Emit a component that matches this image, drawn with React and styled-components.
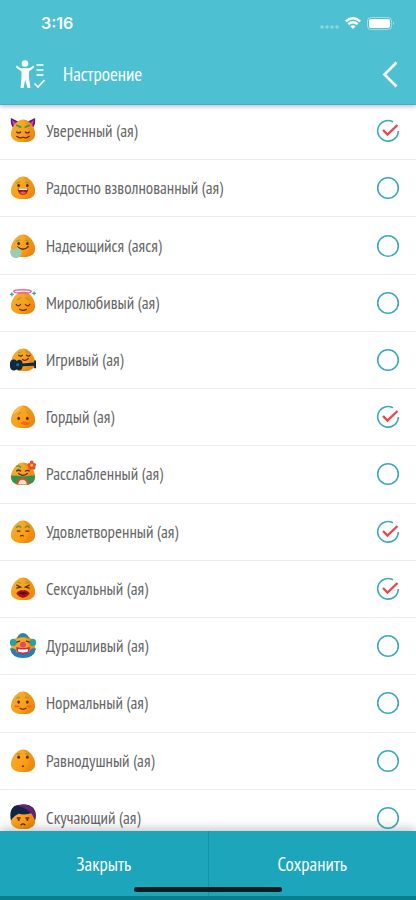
import React, { useState } from 'react';
import styled, { createGlobalStyle } from 'styled-components';

const GlobalStyle = createGlobalStyle`
  *, *::before, *::after { box-sizing: border-box; }
  body { margin: 0; background: #fff; }
  button, input { font: inherit; }
`;

const Screen = styled.div`
  position: relative;
  display: flex;
  flex-direction: column;
  height: 100vh;
  overflow: hidden;
  background: #fff;
  color: #666;
  font-family: 'PT Sans Narrow', 'Liberation Sans Narrow', 'Open Sans', sans-serif;
`;

const Header = styled.header`
  position: relative;
  z-index: 1;
  background: #4dc0d2;
  color: #fff;
  border-bottom: 1px solid #43b0c2;
  box-shadow: 0 1px 5px rgba(0, 0, 0, 0.3);
`;

const StatusBar = styled.div`
  display: flex;
  align-items: center;
  justify-content: space-between;
  height: 46px;
  padding: 0 21px 0 41px;
`;

const Clock = styled.time`
  font: 600 16px/20px Inter, sans-serif;
`;

const StatusIcons = styled.div`
  display: flex;
  align-items: center;
  gap: 6px;
`;

const TitleBar = styled.div`
  display: flex;
  align-items: center;
  height: 58px;
  padding: 0 14px 2px 16px;
`;

const Title = styled.h1`
  flex: 1;
  margin: 0 0 0 18px;
  font-size: 19px;
  line-height: 24px;
  font-weight: 400;
`;

const BackButton = styled.button`
  display: grid;
  place-items: center;
  padding: 0 4px;
  border: 0;
  background: none;
  color: inherit;
`;

const Content = styled.main`
  flex: 1;
  display: flex;
  min-height: 0;
  overflow: hidden;
`;

const MoodList = styled.ul`
  flex: 1;
  display: grid;
  grid-auto-rows: 1fr;
  margin: -2px 0 -16px;
  padding: 0;
  list-style: none;
`;

const MoodItem = styled.li`
  display: flex;
  border-bottom: 1px solid #ebebeb;
`;

const MoodLabel = styled.label`
  flex: 1;
  display: flex;
  align-items: center;
  gap: 9px;
  padding: 0 16px 0 9px;
`;

const MoodName = styled.span`
  flex: 1;
  font-size: 17px;
  line-height: 24px;
`;

const CheckCell = styled.span`
  display: grid;
  place-items: center;
  & > * { grid-area: 1 / 1; }
`;

const CheckInput = styled.input`
  appearance: none;
  width: 24px;
  height: 24px;
  margin: 0;
`;

const CheckDrawing = styled.svg`
  pointer-events: none;
`;

const Footer = styled.footer`
  position: relative;
  z-index: 1;
  display: flex;
  height: 69px;
  background: #1ca5bb;
  border-bottom: 4px solid #087f90;
  box-shadow: 0 -2px 10px rgba(0, 0, 0, 0.25);
`;

const FooterButton = styled.button`
  flex: 1;
  padding: 0;
  border: 0;
  border-right: ${({ $divided }) => ($divided ? '1px solid #1793a7' : '0')};
  background: none;
  color: #fff;
  font-size: 19px;
  line-height: 24px;
`;

const HomeIndicator = styled.div`
  position: absolute;
  z-index: 2;
  bottom: 8px;
  left: 50%;
  width: 148px;
  height: 5px;
  margin-left: -74px;
  border-radius: 3px;
  background: #111c1e;
`;

const ink = { fill: 'none', stroke: '#5b2c16', strokeWidth: 1.3, strokeLinecap: 'round' };
const BODY = 'M14.500 2.500C18.500 2.500 22 5.500 24.500 9.500C26.200 12.500 27 15 27 17.500C27 23 22.500 26 14.500 26C6.500 26 2 23 2 17.500C2 15 2.800 12.500 4.500 9.500C7 5.500 10.500 2.500 14.500 2.500Z';

function Brows() {
  return <path d="M8 9.500L11 8.500M17 8.500L20 9.500" {...ink} stroke="#8aa53f" />;
}
function Dots({ y = 14 }) {
  return <g fill="#5b2c16"><ellipse cx="10" cy={y} rx="1.400" ry="1.700" /><ellipse cx="19" cy={y} rx="1.400" ry="1.700" /></g>;
}

const faces = {
  confident: {
    back: <><path d="M2 1L10 5L5 12Q1 8 2 1ZM27 1L19 5L24 12Q28 8 27 1Z" fill="#5d1b78" /><path d="M3 3L7 6L5 10ZM26 3L22 6L24 10Z" fill="#e936a7" /></>,
    front: <><path d="M8 8.500L12 10.500M21 8.500L17 10.500" {...ink} stroke="#359c52" strokeWidth="1.800" /><path d="M8 15.500Q10 17.500 12 15.500M17 15.500Q19 17.500 21 15.500M8 20Q11 22.500 14.500 21Q18 22.500 21 20" {...ink} /></>,
  },
  excited: { front: <><Brows /><Dots y={12} /><path d="M9 15H20Q19.500 21.500 14.500 21.500Q9.500 21.500 9 15Z" fill="#8d1d25" /><path d="M10 15H19V16.500H10Z" fill="#fff" /><path d="M11 19.500Q14.500 17 18 19.500Q14.500 22.500 11 19.500Z" fill="#f25663" /></> },
  hopeful: { front: <><Brows /><Dots y={12} /><path d="M9 15.500Q15 20.500 20 15" {...ink} /><path d="M1 20Q2 16.500 6 18L9 15.500L11 17.500Q14 18 13 22Q12 27 7 27Q2 27 1 20Z" fill="#9ccdb4" /></> },
  peaceful: { front: <><ellipse cx="14" cy="2.500" rx="9" ry="1.700" fill="none" stroke="#e6629c" strokeWidth="1.600" /><path d="M3 4V7M1.500 5.500H4.500M26 3V6M24.500 4.500H27.500" {...ink} stroke="#35a69c" /><path d="M9 11L12 9M17 9L20 11" {...ink} stroke="#8fa63c" /><path d="M7.500 16Q9.500 19 12 16M17 16Q19.500 19 21.500 16M11 21Q14.500 23.500 18 21" {...ink} /></> },
  playful: { front: <><path d="M10 7L13 6M18 6L21 7" {...ink} stroke="#9ca349" /><path d="M10 9.500Q12 11.500 14 9.500M18 9.500Q20 11.500 22 9.500M14 14Q17 16 20 13" {...ink} /><path d="M1 18C1 13.500 6 13 8 15.500C11 13 14 14.500 14 18L26 17V15H28V23H26V20.500L14 21C14 25 11 26 8 24C5 27 1 25 1 21Z" fill="#0c2940" /><circle cx="9" cy="19.500" r="1.600" fill="#346789" /></> },
  proud: { front: <><path d="M14.500 2.500Q10 9 4 12Q8 4 14.500 2.500Z" fill="#ffc24b" /><path d="M9 12L12 10M19 10L22 12" {...ink} stroke="#a1a543" /><Dots y={16} /><path d="M12 21Q15 17.500 22 21Q18 25 12 21Z" fill="#f2662b" /></> },
  relaxed: { front: <><path d="M2 16Q8 16 14.500 17Q21 16 27 16Q27 26 14.500 26Q2 26 2 16Z" fill="#299557" /><path d="M7 25Q8 18.500 14 18.500Q20 18.500 21 25Z" fill="#d94d2b" /><path d="M9.500 25.500Q10 20.500 14 20.500Q18 20.500 18.500 25.500Z" fill="#f6e5ba" /><path d="M8 6.500Q10 5.500 12 7.500M8 10.500Q10 9 12 11" {...ink} stroke="#369b52" /><path d="M8 11.500Q10 10 12 11.500M17 11.500Q19 10 21 11.500M10 14Q14.500 18 19 14" {...ink} /><g fill="#e5502f"><circle cx="23.500" cy="2.500" r="2" /><circle cx="21" cy="5" r="2" /><circle cx="26" cy="5" r="2" /><circle cx="22" cy="8" r="2" /><circle cx="25.500" cy="8" r="2" /></g><circle cx="23.500" cy="5.500" r="1.500" fill="#ffb43a" /></> },
  satisfied: { front: <><path d="M8 9.500Q10 7 12 9.500M17 9.500Q19 7 21 9.500" {...ink} stroke="#4c9c49" strokeWidth="1.700" /><path d="M8.500 13.500H11.500M17.500 13.500H20.500M12 18.500Q14 17.500 15 18.500" {...ink} /></> },
  sexy: { front: <><path d="M9 7.500L12 8.500M20 7.500L17 8.500" {...ink} stroke="#89a642" /><path d="M8 10.500L12 12.500L8 13.500M21 10.500L17 12.500L21 13.500" {...ink} /><path d="M7.500 19Q12 14.500 14.500 16Q17 14.500 21.500 19Q18 24 14.500 23.500Q11 24 7.500 19Z" fill="#a91022" /><path d="M9.500 19Q14.500 16.500 19.500 19Q14.500 21.500 9.500 19Z" fill="#430d19" /></> },
  goofy: {
    back: <><circle cx="5" cy="11" r="4" fill="#2aa3a0" /><circle cx="24" cy="11" r="4" fill="#2aa3a0" /></>,
    front: <><path d="M10 3Q14.500 -1 19 3L21 7Q14.500 4 8 7Z" fill="#2786a8" /><path d="M1 17Q7 16 8 21H21Q22 16 28 17Q26 27 14.500 27Q3 27 1 17Z" fill="#237fb5" /><circle cx="4.500" cy="11" r="3.500" fill="#2aa3a0" /><circle cx="24.500" cy="11" r="3.500" fill="#2aa3a0" /><path d="M8 10.500L11 9.500M18 9.500L21 10.500" {...ink} /><path d="M7.500 15.500Q14.500 17.500 21.500 15.500Q22 23 14.500 23Q7 23 7.500 15.500Z" fill="#cc2947" /><path d="M9.500 17.500Q14.500 19 19.500 17.500V20.500Q14.500 22 9.500 20.500Z" fill="#fff" /><circle cx="14.500" cy="13" r="3" fill="#ed3d75" /></>,
  },
  normal: { front: <><Brows /><Dots y={13.500} /><path d="M11.500 20Q14.500 22 17.500 20" {...ink} /><path d="M6.500 18H10M19 18H22.500" {...ink} stroke="#f2662e" strokeWidth="2" /></> },
  indifferent: { front: <><path d="M8.500 7H11.500M17.500 7H20.500" {...ink} stroke="#8d9c45" /><Dots y={10.500} /><ellipse cx="14.500" cy="20" rx="1.300" ry="1" fill="#8a3b1a" /></> },
  bored: { front: <><path d="M2 17C0 8 3 2 9 1Q20 -1 25 4Q29 8 27 17Q26 14 24 9Q17 12 10 10Q5 12 2 17Z" fill="#122443" /><path d="M8 2Q20 -2 25 5Q29 9 27 16Q22 4 8 2Z" fill="#632178" /><path d="M8.500 14.500H11.500M17.500 14.500H20.500M12.500 21.500Q14.500 19.500 16.500 21.500" {...ink} /><circle cx="10" cy="16.500" r="1.100" fill="#5b2c16" /><circle cx="19" cy="16.500" r="1.100" fill="#5b2c16" /></> },
};

function MoodFace({ kind }) {
  const { back, front } = faces[kind];
  const gradient = `skin-${kind}`;
  return (
    <svg width="28" height="28" viewBox="0 0 29 29" aria-hidden="true">
      <defs>
        <linearGradient id={gradient} x1="0" y1="0" x2="1" y2="1">
          <stop offset="0" stopColor="#f5b13a" />
          <stop offset="0.600" stopColor="#fa9e14" />
          <stop offset="1" stopColor="#ee8008" />
        </linearGradient>
      </defs>
      {back}
      <path d={BODY} fill={`url(#${gradient})`} />
      <path d="M14.500 2.500C18.500 2.500 22 5.500 24.500 9.500C26.200 12.500 27 15 27 17.500C27 23 22.500 26 15 26Q26 16 14.500 2.500Z" fill="#e98310" opacity="0.450" />
      {front}
    </svg>
  );
}

function CheckMark({ checked }) {
  return (
    <CheckDrawing width="24" height="24" viewBox="0 0 24 24" fill="none" aria-hidden="true">
      {checked ? (
        <>
          <path d="M17 2.800A10.300 10.300 0 1 0 22.300 12" stroke="#3baabd" strokeWidth="1.600" />
          <path d="M7 11L11.500 15.500L21.500 6" stroke="#e94850" strokeWidth="2.400" />
        </>
      ) : (
        <circle cx="12" cy="12" r="10.300" stroke="#3baabd" strokeWidth="1.600" />
      )}
    </CheckDrawing>
  );
}

const moods = [
  ['confident', 'Уверенный (ая)', true],
  ['excited', 'Радостно взволнованный (ая)', false],
  ['hopeful', 'Надеющийся (аяся)', false],
  ['peaceful', 'Миролюбивый (ая)', false],
  ['playful', 'Игривый (ая)', false],
  ['proud', 'Гордый (ая)', true],
  ['relaxed', 'Расслабленный (ая)', false],
  ['satisfied', 'Удовлетворенный (ая)', true],
  ['sexy', 'Сексуальный (ая)', true],
  ['goofy', 'Дурашливый (ая)', false],
  ['normal', 'Нормальный (ая)', false],
  ['indifferent', 'Равнодушный (ая)', false],
  ['bored', 'Скучающий (ая)', false],
];

function MoodRow({ kind, name, initial }) {
  const [checked, setChecked] = useState(initial);
  return (
    <MoodItem>
      <MoodLabel>
        <MoodFace kind={kind} />
        <MoodName>{name}</MoodName>
        <CheckCell>
          <CheckInput type="checkbox" checked={checked} onChange={() => setChecked(!checked)} />
          <CheckMark checked={checked} />
        </CheckCell>
      </MoodLabel>
    </MoodItem>
  );
}

export default function App() {
  return (
    <Screen>
      <GlobalStyle />
      <Header>
        <StatusBar>
          <Clock>3:16</Clock>
          <StatusIcons>
            <svg width="20" height="16" viewBox="0 0 20 16" fill="#fff" opacity="0.350" aria-hidden="true">
              <circle cx="3" cy="12" r="1.800" /><circle cx="8" cy="12" r="1.800" /><circle cx="13" cy="12" r="1.800" /><circle cx="18" cy="12" r="1.800" />
            </svg>
            <svg width="16" height="12" viewBox="0 0 16 12" fill="none" stroke="#fff" strokeWidth="2.400" aria-hidden="true">
              <path d="M0.800 4.400Q8 -1.800 15.200 4.400M3.300 7.200Q8 3.200 12.700 7.200" />
              <path d="M8 12L5.300 9.300Q8 7 10.700 9.300Z" fill="#fff" stroke="none" />
            </svg>
            <svg width="28" height="13" viewBox="0 0 28 13" aria-hidden="true">
              <rect x="0.500" y="0.500" width="24" height="12" rx="3.500" fill="none" stroke="#fff" opacity="0.450" />
              <rect x="2" y="2" width="21" height="9" rx="2" fill="#fff" />
              <path d="M26 4.500Q28 6.500 26 8.500Z" fill="#fff" opacity="0.500" />
            </svg>
          </StatusIcons>
        </StatusBar>
        <TitleBar>
          <svg width="29" height="29" viewBox="0 0 29 29" fill="none" aria-hidden="true">
            <circle cx="9" cy="3.500" r="3.300" fill="#fff" />
            <path d="M0.500 5.500Q4 9 9 8.200Q14 9 17.500 5.500L18.200 7.500L13 11.500V18L14.500 28H11.500L9.200 20L7.500 28H4.500L5.500 18V11.500L0 7.500Z" fill="#fff" />
            <path d="M20.500 5H27.500M20.500 10H27.500M20.500 15H27.500M18.500 23.500L22 27L28.500 20" stroke="#fff" strokeWidth="1.700" />
          </svg>
          <Title>Настроение</Title>
          <BackButton type="button" aria-label="Назад">
            <svg width="16" height="27" viewBox="0 0 16 27" fill="none" aria-hidden="true">
              <path d="M14.500 1.500L2.500 13.500L14.500 25.500" stroke="#fff" strokeWidth="2.600" />
            </svg>
          </BackButton>
        </TitleBar>
      </Header>
      <Content>
        <MoodList>
          {moods.map(([kind, name, initial]) => (
            <MoodRow key={kind} kind={kind} name={name} initial={initial} />
          ))}
        </MoodList>
      </Content>
      <Footer>
        <FooterButton type="button" $divided>Закрыть</FooterButton>
        <FooterButton type="button">Сохранить</FooterButton>
      </Footer>
      <HomeIndicator />
    </Screen>
  );
}
